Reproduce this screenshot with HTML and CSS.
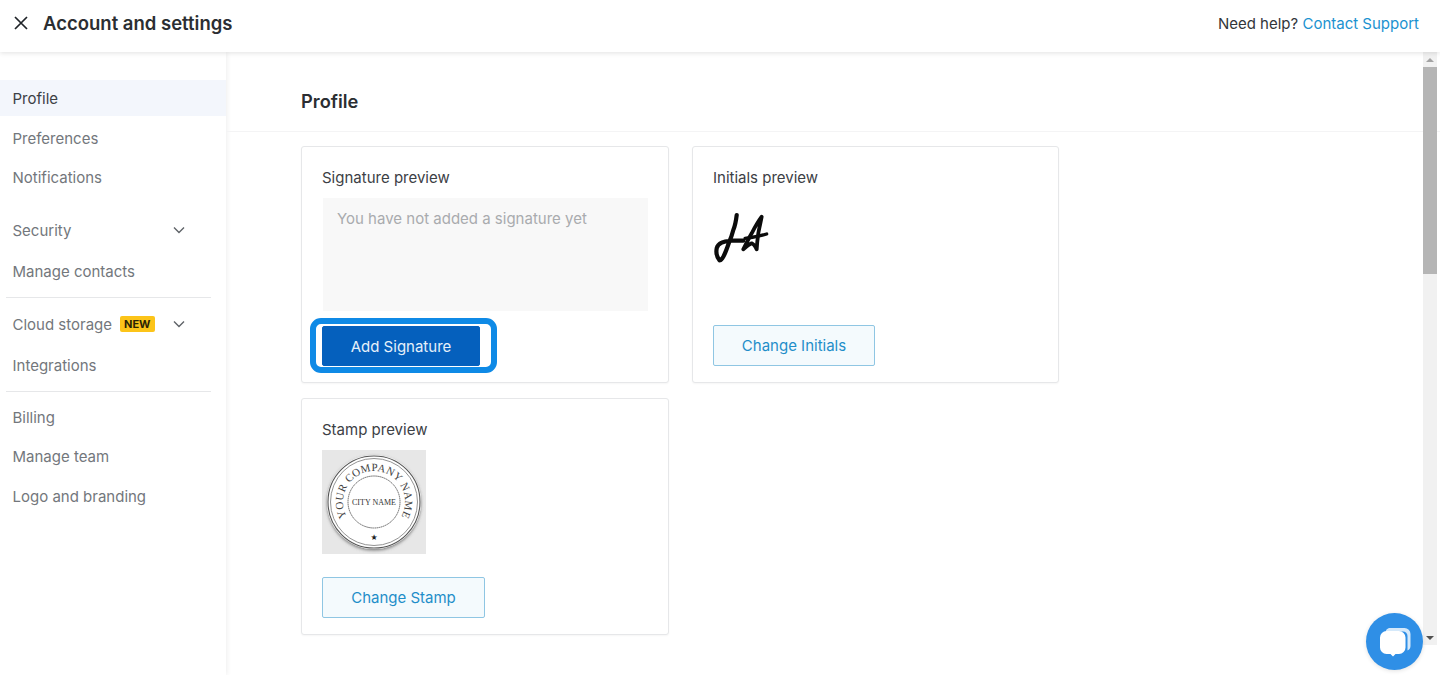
FILE: index.html
```html
<!DOCTYPE html>
<html lang="en">
<head>
<meta charset="utf-8">
<title>Account and settings</title>
<link rel="stylesheet" href="styles.css">
</head>
<body>
<header class="topbar">
  <div class="topbar-left">
    <svg class="close-icon" width="14" height="14" viewBox="0 0 14 14"><path d="M1 1l12 12M13 1L1 13" fill="none" stroke="#1f2328" stroke-width="1.7"/></svg>
    <h1 class="topbar-title">Account and settings</h1>
  </div>
  <div class="help">Need help? <a class="help-link">Contact Support</a></div>
</header>
<div class="body-row">
  <nav class="sidebar">
    <a class="nav-item active mb4">Profile</a>
    <a class="nav-item mb3">Preferences</a>
    <a class="nav-item mb17">Notifications</a>
    <a class="nav-item mb5">Security
      <svg class="chev" width="12" height="8" viewBox="0 0 12 8"><path d="M1 1.500l5 5 5-5" fill="none" stroke="#5f6368" stroke-width="1.400"/></svg>
    </a>
    <a class="nav-item mb8">Manage contacts</a>
    <hr class="nav-sep">
    <a class="nav-item mb5">Cloud storage<span class="badge">NEW</span>
      <svg class="chev" width="12" height="8" viewBox="0 0 12 8"><path d="M1 1.500l5 5 5-5" fill="none" stroke="#5f6368" stroke-width="1.400"/></svg>
    </a>
    <a class="nav-item mb8">Integrations</a>
    <hr class="nav-sep nav-sep-billing">
    <a class="nav-item mb3">Billing</a>
    <a class="nav-item mb4">Manage team</a>
    <a class="nav-item">Logo and branding</a>
  </nav>
  <main class="main">
    <h2 class="page-title">Profile</h2>
    <div class="cards">
      <section class="card">
        <h3 class="card-title">Signature preview</h3>
        <div class="sig-empty">You have not added a signature yet</div>
        <div class="highlight"><button class="btn btn-primary">Add Signature</button></div>
      </section>
      <section class="card">
        <h3 class="card-title">Initials preview</h3>
        <div class="initials">
          <svg width="60" height="60" viewBox="0 0 60 60"><g fill="none" stroke="#0b0b0b" stroke-linecap="round" stroke-linejoin="round"><path d="M24.700 10C24 16 23 21 21.300 25C20 30 19 33 17.300 36.700C15.500 42 13.500 48 11.300 51.700C10 54 8 56 7.300 55C5 52 4 47 4.700 43.300C5.500 40 8 38.500 9.700 37.700C13 36 16 36 19.700 35.700C24 35.500 28 35.500 31.300 35.700" stroke-width="4.200"/><path d="M31.300 44.300C34 39 37 33 39.700 28.300C43 22 46.500 16 49.700 11.700C48.500 18 47 24 46.300 28.300C45.500 34 45 39 44.700 44.300C43 41 41.500 39 39.700 38.300C37 39 34 42 31.300 44.300" stroke-width="3.800"/><path d="M33 33.300C40 32.500 48 31 54.700 29" stroke-width="3.200"/></g></svg>
        </div>
        <button class="btn btn-outline btn-initials">Change Initials</button>
      </section>
      <section class="card">
        <h3 class="card-title">Stamp preview</h3>
        <div class="stamp">
          <svg width="104" height="104" viewBox="0 0 104 104">
            <defs>
              <path id="stamp-arc" d="M28.300 72A31 31 0 1 1 75.700 72"/>
              <filter id="stamp-shadow" x="-10%" y="-10%" width="120%" height="120%"><feDropShadow dx="0" dy="1.500" stdDeviation="1.500" flood-color="#555" flood-opacity=".7"/></filter>
            </defs>
            <circle cx="52" cy="52" r="47" fill="#fff" filter="url(#stamp-shadow)"/>
            <circle cx="52" cy="52" r="46" fill="none" stroke="#555" stroke-width="1.100"/>
            <circle cx="52" cy="52" r="43.500" fill="none" stroke="#777" stroke-width=".8"/>
            <circle cx="52" cy="52" r="26" fill="none" stroke="#666" stroke-width="1" stroke-dasharray="1.500 .5"/>
            <text class="stamp-ring"><textPath href="#stamp-arc" startOffset="50%" text-anchor="middle">YOUR COMPANY NAME</textPath></text>
            <text class="stamp-city" x="52" y="54.500" text-anchor="middle">CITY NAME</text>
            <text class="stamp-star" x="52" y="90" text-anchor="middle">★</text>
          </svg>
        </div>
        <button class="btn btn-outline btn-stamp">Change Stamp</button>
      </section>
    </div>
  </main>
  <div class="scrollbar">
    <div class="scroll-arrow"><span class="tri-up"></span></div>
    <div class="scroll-thumb"></div>
    <div class="scroll-track"></div>
    <div class="scroll-arrow"><span class="tri-down"></span></div>
  </div>
  <div class="edge"></div>
</div>
<button class="chat" aria-label="Chat">
  <svg width="36" height="36" viewBox="0 0 36 36">
    <path d="M12 4h15.500a6 6 0 0 1 6 6v12a5 5 0 0 1-3 4.500V12a4.500 4.500 0 0 0-4.500-4.500H8.500A5 5 0 0 1 12 4z" fill="#fff" fill-opacity=".8"/>
    <path d="M9.500 7h12.500a6.500 6.500 0 0 1 6.500 6.500v10a6.500 6.500 0 0 1-6.500 6.500h-3.500l-2.500 2.500-2.500-2.500H9.500A6.500 6.500 0 0 1 3 23.500v-10A6.500 6.500 0 0 1 9.500 7z" fill="#fff"/>
  </svg>
</button>
</body>
</html>
```
FILE: styles.css
```css
* { box-sizing: border-box; }
html, body { height: 100%; }
body {
  margin: 0;
  height: 675px;
  overflow: hidden;
  background: #fff;
  color: #26292d;
  font-family: Inter, "Liberation Sans", sans-serif;
  display: flex;
  flex-direction: column;
}
.topbar {
  height: 52px;
  flex: none;
  display: flex;
  align-items: center;
  justify-content: space-between;
  padding: 0 21px 6px 14px;
  background: #fff;
  box-shadow: 0 1px 5px rgba(0,0,0,.12);
  position: relative;
  z-index: 2;
}
.topbar-left { display: flex; align-items: center; gap: 15px; }
.close-icon { display: block; }
.topbar-title { margin: 0; font-size: 18.500px; font-weight: 600; color: #2b2e32; }
.help { font-size: 15px; color: #33363a; }
.help-link { color: #1b92d0; }
.body-row { flex: 1; display: flex; min-height: 0; }
.sidebar {
  width: 226px;
  flex: none;
  padding-top: 28px;
  background: #fff;
  box-shadow: 1px 0 5px rgba(0,0,0,.07);
  display: flex;
  flex-direction: column;
}
.nav-item {
  height: 36px;
  flex: none;
  padding-left: 12.500px;
  display: flex;
  align-items: center;
  font-size: 15px;
  color: #73777c;
  position: relative;
}
.nav-item.active { background: #f3f6fc; color: #3c4045; }
.mb3 { margin-bottom: 3px; }
.mb4 { margin-bottom: 4px; }
.mb5 { margin-bottom: 5px; }
.mb8 { margin-bottom: 8px; }
.mb17 { margin-bottom: 17px; }
.chev { position: absolute; left: 173px; top: 14px; }
.nav-sep { flex: none; width: 205px; margin: 0 0 8px 6px; border: 0; border-top: 1px solid #e6e7e9; }
.nav-sep-billing { margin-bottom: 7px; }
.badge {
  margin-left: 8px;
  padding: 0 4px;
  height: 16px;
  line-height: 16px;
  font-size: 11px;
  font-weight: 700;
  color: #2a2305;
  background: #fcc419;
  border-radius: 2px;
}
.main { flex: 1; min-width: 0; padding: 0 0 0 75px; }
.page-title {
  margin: 0 -75px 14px -75px;
  padding: 38px 0 19px 75px;
  font-size: 18.300px;
  font-weight: 600;
  line-height: 22px;
  color: #2b2e32;
  border-bottom: 1px solid #f4f4f5;
}
.cards {
  display: grid;
  grid-template-columns: 368px 367px;
  grid-auto-rows: 237px;
  column-gap: 23px;
  row-gap: 15px;
}
.card {
  border: 1px solid #e6e7e9;
  border-radius: 3px;
  padding: 21px 20px 0;
  background: #fff;
  box-shadow: 0 1px 2px rgba(0,0,0,.04);
  position: relative;
}
.card-title { margin: 0; font-size: 15px; font-weight: 400; line-height: 20px; color: #3c4045; }
.sig-empty {
  margin: 10px 0 0 1px;
  width: 325px;
  height: 113px;
  padding: 11px 14px;
  background: #f8f8f8;
  font-size: 15px;
  line-height: 20px;
  color: #a9abae;
}
.highlight {
  position: absolute;
  left: 8px;
  top: 171px;
  width: 187px;
  height: 55px;
  padding: 2px 11px 1px 6px;
  border: 6px solid #0f8ae6;
  border-radius: 11px;
  background: #fff;
}
.highlight .btn { width: 100%; height: 100%; display: block; }
.btn {
  font-family: inherit;
  font-size: 15px;
  border-radius: 2px;
  cursor: pointer;
  padding: 0;
}
.btn-primary { background: #0560bd; border: 1px solid #0560bd; color: #e6f0fa; }
.btn-outline { background: #f4fafd; border: 1px solid #8fc6e3; color: #1f8ec9; height: 41px; position: absolute; top: 178px; left: 20px; }
.btn-initials { width: 162px; }
.btn-stamp { width: 163px; }
.initials { margin: 17px 0 0 -1px; }
.initials svg { display: block; }
.stamp {
  margin-top: 10px;
  width: 104px;
  height: 104px;
  background: #e7e7e7;
}
.stamp svg { display: block; }
.stamp-ring { font-family: "Liberation Serif", serif; font-size: 11px; letter-spacing: .3px; fill: #444; }
.stamp-city { font-family: "Liberation Serif", serif; font-size: 8px; font-weight: 400; fill: #333; }
.stamp-star { font-size: 8px; fill: #222; font-family: "DejaVu Sans", sans-serif; }
.scrollbar {
  width: 14px;
  flex: none;
  height: 593px;
  background: #f1f1f1;
  display: flex;
  flex-direction: column;
}
.scroll-arrow { height: 15px; flex: none; display: flex; align-items: center; justify-content: center; }
.tri-up, .tri-down { width: 0; height: 0; border-left: 4px solid transparent; border-right: 4px solid transparent; }
.tri-up { border-bottom: 4px solid #a3a3a3; }
.tri-down { border-top: 4px solid #505050; }
.scroll-thumb { height: 207px; flex: none; background: #b5b5b5; }
.scroll-track { flex: 1; }
.edge { width: 3px; flex: none; }
.chat {
  position: absolute;
  left: 1366px;
  top: 613px;
  width: 57px;
  height: 57px;
  padding: 0;
  border: 0;
  border-radius: 50%;
  background: #2f8fe6;
  box-shadow: 0 1px 4px rgba(0,0,0,.12);
  display: flex;
  align-items: center;
  justify-content: center;
}
.chat svg { display: block; }
```
